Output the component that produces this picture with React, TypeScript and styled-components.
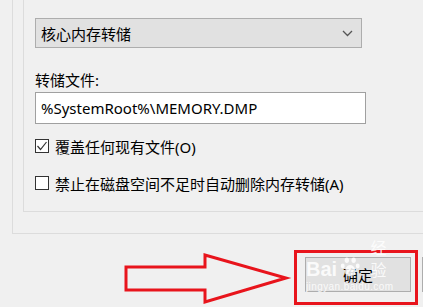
import React from "react";
import styled, { createGlobalStyle } from "styled-components";

const GlobalStyle = createGlobalStyle`
  html, body {
    margin: 0;
    padding: 0;
    background: #f0f0f0;
  }
  body {
    width: 423px;
    height: 307px;
    overflow: hidden;
    font-family: "Noto Sans", "Noto Sans CJK SC", sans-serif;
    font-size: 15px;
    color: #000;
  }
`;

const Page = styled.div`
  position: relative;
  width: 423px;
  height: 307px;
  overflow: hidden;
`;

const OuterGroup = styled.div`
  margin-left: 12px;
  border-left: 1px solid #dcdcdc;
  border-bottom: 1px solid #dcdcdc;
  padding: 0 0 21px 10px;
`;

const InnerGroup = styled.div`
  border-left: 1px solid #dcdcdc;
  border-bottom: 1px solid #dcdcdc;
  padding: 18px 0 18px 11px;
  display: flex;
  flex-direction: column;
`;

const Select = styled.div`
  width: 327px;
  height: 30px;
  box-sizing: border-box;
  background: #e1e1e1;
  border: 1px solid #adadad;
  display: flex;
  align-items: center;
  justify-content: space-between;
  padding: 0 8px 0 5px;
`;

const Label = styled.div`
  margin-top: 22px;
  line-height: 20px;
`;

const Input = styled.div`
  margin-top: 2px;
  width: 331px;
  height: 32px;
  box-sizing: border-box;
  background: #fff;
  border: 1px solid #a0a0a0;
  display: flex;
  align-items: center;
  padding-left: 5px;
`;

const CheckRow = styled.label<{ $top: number }>`
  margin-top: ${(p) => p.$top}px;
  display: flex;
  align-items: center;
  gap: 6px;
  height: 20px;
`;

const Box = styled.span`
  width: 14px;
  height: 14px;
  box-sizing: border-box;
  border: 1px solid #333;
  background: #fff;
  display: flex;
  align-items: center;
  justify-content: center;
`;

const Footer = styled.div`
  display: flex;
  gap: 11px;
  padding: 23px 0 0 305px;
`;

const Button = styled.div`
  flex: none;
  width: 106px;
  height: 35px;
  box-sizing: border-box;
  background: #e1e1e1;
  border: 1px solid #adadad;
  display: flex;
  align-items: center;
  justify-content: center;
`;

const Highlight = styled.div`
  position: absolute;
  left: 294px;
  top: 250px;
  width: 124px;
  height: 55px;
  box-sizing: border-box;
  border: 3px solid #e8141c;
`;

const Arrow = styled.svg`
  position: absolute;
  left: 120px;
  top: 250px;
`;

const Watermark = styled.div`
  position: absolute;
  left: 306px;
  top: 251px;
  width: 92px;
  color: rgba(255, 255, 255, 0.85);
  font-family: "Liberation Sans", Arial, sans-serif;
  pointer-events: none;
`;

const WmTop = styled.div`
  display: flex;
  align-items: flex-end;
  height: 29px;
`;

const WmBai = styled.span`
  font-size: 20px;
  font-weight: bold;
  line-height: 22px;
`;

const WmJing = styled.span`
  font-family: "Noto Sans CJK SC", sans-serif;
  font-size: 16px;
  line-height: 22px;
  margin-left: 9px;
`;

const WmUrl = styled.div`
  font-size: 10px;
  line-height: 12px;
  margin-top: 1px;
  letter-spacing: 0.4px;
`;

function Chevron() {
  return (
    <svg width="11" height="7" viewBox="0 0 11 7">
      <polyline points="1,1 5.5,5.5 10,1" fill="none" stroke="#555" strokeWidth="1.3" />
    </svg>
  );
}

function Check() {
  return (
    <svg width="12" height="12" viewBox="0 0 12 12">
      <polyline points="1.5,6 4.5,9.5 10.5,2" fill="none" stroke="#333" strokeWidth="1.2" />
    </svg>
  );
}

function Paw() {
  return (
    <svg width="25" height="24" viewBox="0 0 22 22" style={{ margin: "0 0 1px 3px" }}>
      <g fill="rgba(255,255,255,0.85)">
        <ellipse cx="7" cy="4" rx="2.2" ry="2.8" />
        <ellipse cx="14" cy="4" rx="2.2" ry="2.8" />
        <ellipse cx="2.8" cy="10" rx="2" ry="2.5" />
        <ellipse cx="18.2" cy="10" rx="2" ry="2.5" />
        <path d="M10.5 9 C6 9 4 16 6 19 C8 21 13 21 15 19 C17 16 15 9 10.5 9 Z" />
      </g>
    </svg>
  );
}

export default function App() {
  return (
    <Page>
      <GlobalStyle />
      <OuterGroup>
        <InnerGroup>
          <Select>
            <span>核心内存转储</span>
            <Chevron />
          </Select>
          <Label>转储文件:</Label>
          <Input>%SystemRoot%\MEMORY.DMP</Input>
          <CheckRow $top={12}>
            <Box>
              <Check />
            </Box>
            覆盖任何现有文件(O)
          </CheckRow>
          <CheckRow $top={17}>
            <Box />
            禁止在磁盘空间不足时自动删除内存转储(A)
          </CheckRow>
        </InnerGroup>
      </OuterGroup>
      <Footer>
        <Button>确定</Button>
        <Button />
      </Footer>
      <Arrow width="175" height="57" viewBox="0 0 175 57">
        <polygon
          points="6,17 85,17 85,5 166,28 85,52 85,40 6,40"
          fill="none"
          stroke="#e8141c"
          strokeWidth="3"
          strokeLinejoin="miter"
        />
      </Arrow>
      <Highlight />
      <Watermark>
        <WmTop>
          <WmBai>Bai</WmBai>
          <Paw />
          <WmJing>经验</WmJing>
        </WmTop>
        <WmUrl>jingyan.baidu.com</WmUrl>
      </Watermark>
    </Page>
  );
}
